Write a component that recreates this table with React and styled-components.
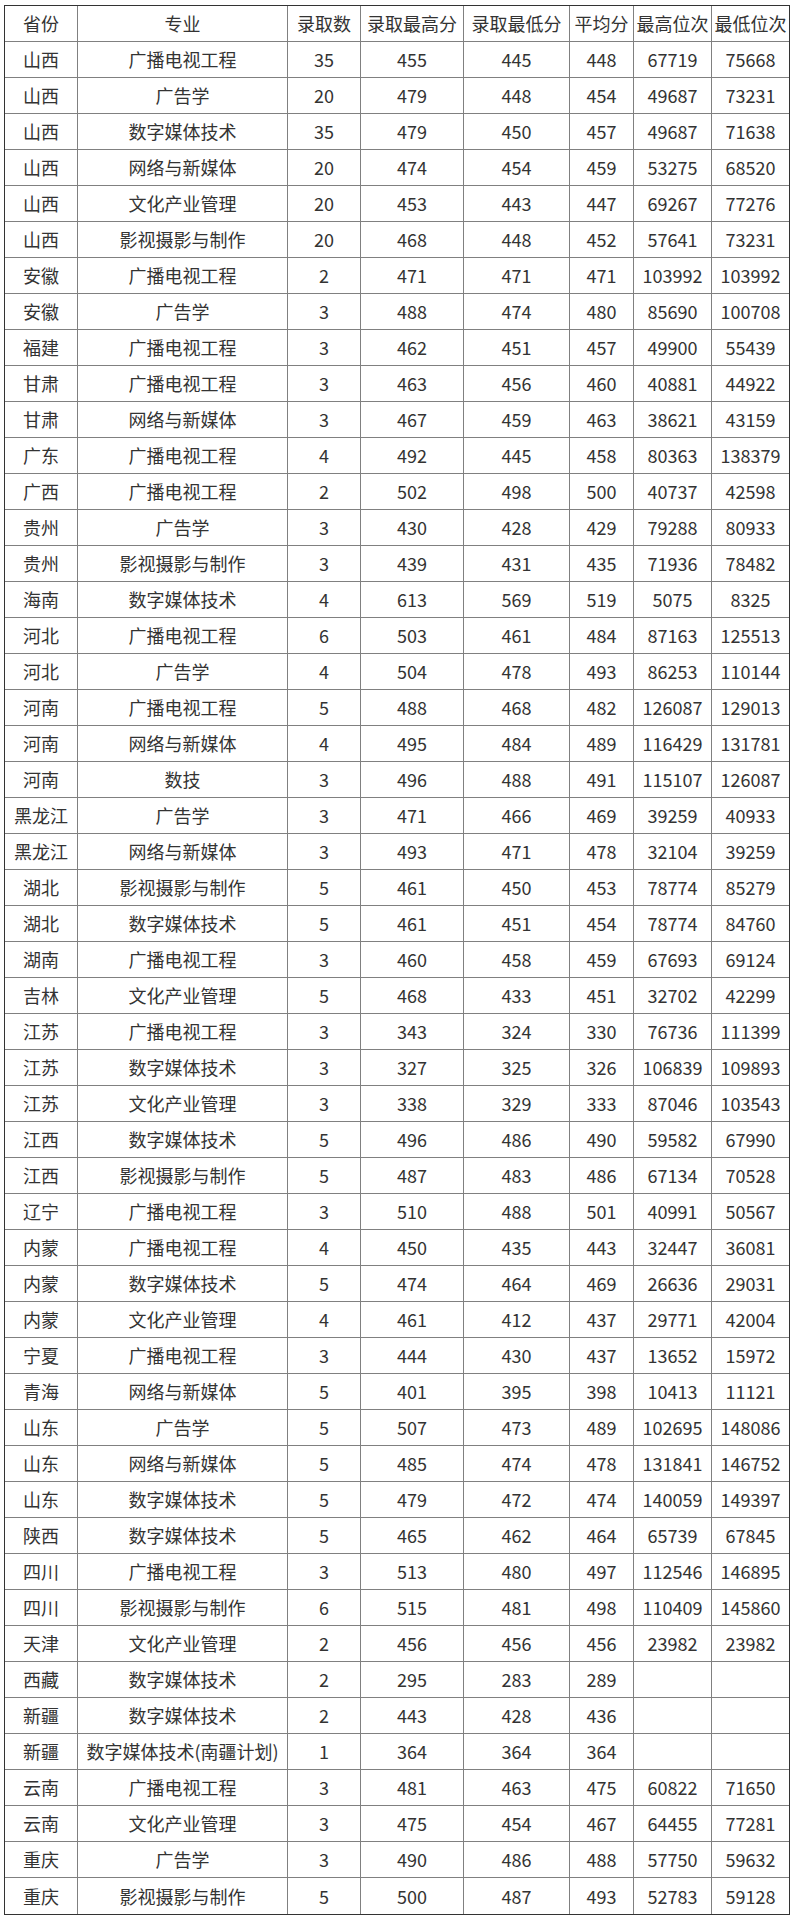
import React from 'react';
import styled, { createGlobalStyle } from 'styled-components';

const GlobalStyle = createGlobalStyle`
  html, body {
    margin: 0;
    padding: 0;
    background: #ffffff;
  }
  body {
    font-family: "Noto Sans CJK SC", "Noto Sans", sans-serif;
    color: #333333;
  }
`;

const Page = styled.div`
  padding: 5px 0 0 4px;
`;

const Table = styled.table`
  border-collapse: separate;
  border-spacing: 0;
  table-layout: fixed;
  width: 786px;
  border: 1px solid #333333;
  font-size: 18px;
  color: #333333;
`;

const Cell = styled.td`
  box-sizing: border-box;
  height: 36px;
  padding: 0;
  text-align: center;
  vertical-align: middle;
  white-space: nowrap;
  line-height: 35px;
  font-weight: 400;
  border-right: 1px solid #808080;
  border-bottom: 1px solid #808080;
  width: ${props => props.$w}px;

  &:last-child {
    border-right: none;
  }

  tr:last-child > & {
    border-bottom: none;
  }
`;

const HeadCell = styled(Cell).attrs({ as: 'th' })``;

const columns = [
  { label: '省份', w: 73 },
  { label: '专业', w: 210 },
  { label: '录取数', w: 73 },
  { label: '录取最高分', w: 103 },
  { label: '录取最低分', w: 106 },
  { label: '平均分', w: 64 },
  { label: '最高位次', w: 78 },
  { label: '最低位次', w: 77 },
];

const rows = [
  ['山西', '广播电视工程', '35', '455', '445', '448', '67719', '75668'],
  ['山西', '广告学', '20', '479', '448', '454', '49687', '73231'],
  ['山西', '数字媒体技术', '35', '479', '450', '457', '49687', '71638'],
  ['山西', '网络与新媒体', '20', '474', '454', '459', '53275', '68520'],
  ['山西', '文化产业管理', '20', '453', '443', '447', '69267', '77276'],
  ['山西', '影视摄影与制作', '20', '468', '448', '452', '57641', '73231'],
  ['安徽', '广播电视工程', '2', '471', '471', '471', '103992', '103992'],
  ['安徽', '广告学', '3', '488', '474', '480', '85690', '100708'],
  ['福建', '广播电视工程', '3', '462', '451', '457', '49900', '55439'],
  ['甘肃', '广播电视工程', '3', '463', '456', '460', '40881', '44922'],
  ['甘肃', '网络与新媒体', '3', '467', '459', '463', '38621', '43159'],
  ['广东', '广播电视工程', '4', '492', '445', '458', '80363', '138379'],
  ['广西', '广播电视工程', '2', '502', '498', '500', '40737', '42598'],
  ['贵州', '广告学', '3', '430', '428', '429', '79288', '80933'],
  ['贵州', '影视摄影与制作', '3', '439', '431', '435', '71936', '78482'],
  ['海南', '数字媒体技术', '4', '613', '569', '519', '5075', '8325'],
  ['河北', '广播电视工程', '6', '503', '461', '484', '87163', '125513'],
  ['河北', '广告学', '4', '504', '478', '493', '86253', '110144'],
  ['河南', '广播电视工程', '5', '488', '468', '482', '126087', '129013'],
  ['河南', '网络与新媒体', '4', '495', '484', '489', '116429', '131781'],
  ['河南', '数技', '3', '496', '488', '491', '115107', '126087'],
  ['黑龙江', '广告学', '3', '471', '466', '469', '39259', '40933'],
  ['黑龙江', '网络与新媒体', '3', '493', '471', '478', '32104', '39259'],
  ['湖北', '影视摄影与制作', '5', '461', '450', '453', '78774', '85279'],
  ['湖北', '数字媒体技术', '5', '461', '451', '454', '78774', '84760'],
  ['湖南', '广播电视工程', '3', '460', '458', '459', '67693', '69124'],
  ['吉林', '文化产业管理', '5', '468', '433', '451', '32702', '42299'],
  ['江苏', '广播电视工程', '3', '343', '324', '330', '76736', '111399'],
  ['江苏', '数字媒体技术', '3', '327', '325', '326', '106839', '109893'],
  ['江苏', '文化产业管理', '3', '338', '329', '333', '87046', '103543'],
  ['江西', '数字媒体技术', '5', '496', '486', '490', '59582', '67990'],
  ['江西', '影视摄影与制作', '5', '487', '483', '486', '67134', '70528'],
  ['辽宁', '广播电视工程', '3', '510', '488', '501', '40991', '50567'],
  ['内蒙', '广播电视工程', '4', '450', '435', '443', '32447', '36081'],
  ['内蒙', '数字媒体技术', '5', '474', '464', '469', '26636', '29031'],
  ['内蒙', '文化产业管理', '4', '461', '412', '437', '29771', '42004'],
  ['宁夏', '广播电视工程', '3', '444', '430', '437', '13652', '15972'],
  ['青海', '网络与新媒体', '5', '401', '395', '398', '10413', '11121'],
  ['山东', '广告学', '5', '507', '473', '489', '102695', '148086'],
  ['山东', '网络与新媒体', '5', '485', '474', '478', '131841', '146752'],
  ['山东', '数字媒体技术', '5', '479', '472', '474', '140059', '149397'],
  ['陕西', '数字媒体技术', '5', '465', '462', '464', '65739', '67845'],
  ['四川', '广播电视工程', '3', '513', '480', '497', '112546', '146895'],
  ['四川', '影视摄影与制作', '6', '515', '481', '498', '110409', '145860'],
  ['天津', '文化产业管理', '2', '456', '456', '456', '23982', '23982'],
  ['西藏', '数字媒体技术', '2', '295', '283', '289', '', ''],
  ['新疆', '数字媒体技术', '2', '443', '428', '436', '', ''],
  ['新疆', '数字媒体技术(南疆计划)', '1', '364', '364', '364', '', ''],
  ['云南', '广播电视工程', '3', '481', '463', '475', '60822', '71650'],
  ['云南', '文化产业管理', '3', '475', '454', '467', '64455', '77281'],
  ['重庆', '广告学', '3', '490', '486', '488', '57750', '59632'],
  ['重庆', '影视摄影与制作', '5', '500', '487', '493', '52783', '59128'],
];

const App = () => {
  return (
    <>
      <GlobalStyle />
      <Page>
        <Table>
          <tbody>
            <tr>
              {columns.map(col => (
                <HeadCell key={col.label} $w={col.w}>{col.label}</HeadCell>
              ))}
            </tr>
            {rows.map((row, i) => (
              <tr key={i}>
                {row.map((value, j) => (
                  <Cell key={j}>{value}</Cell>
                ))}
              </tr>
            ))}
          </tbody>
        </Table>
      </Page>
    </>
  );
};

export default App;
